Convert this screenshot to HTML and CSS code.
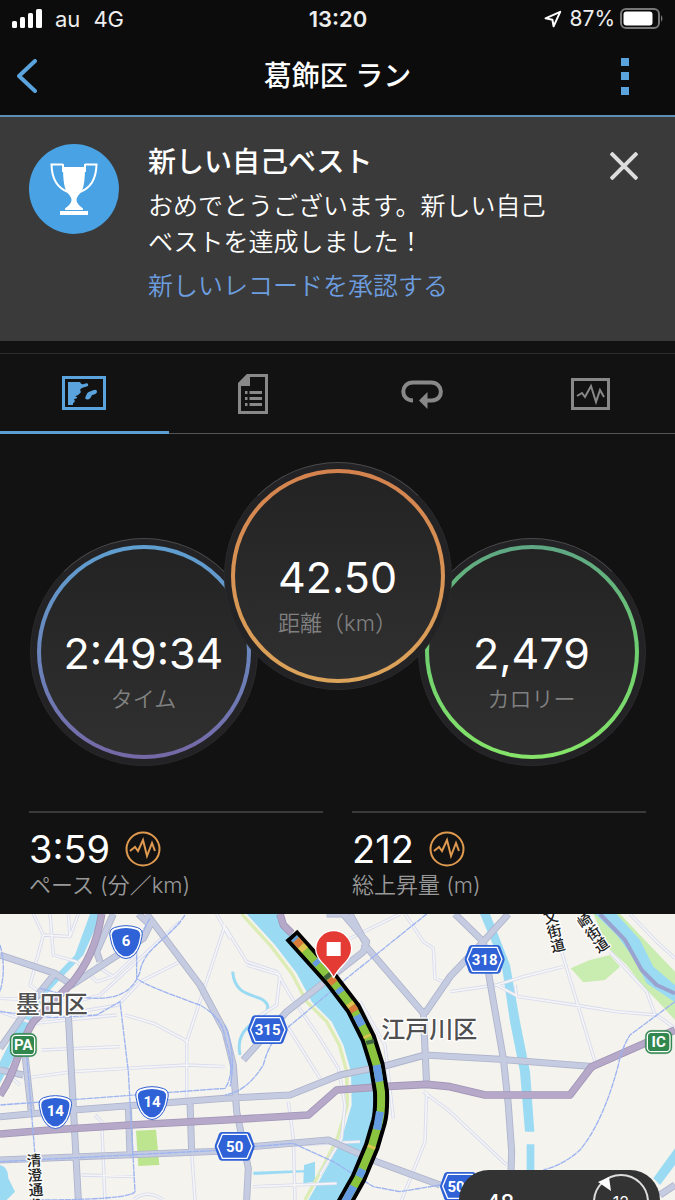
FILE: index.html
```
<!DOCTYPE html>
<html lang="ja">
  <head>
    <meta charset="UTF-8" />
    <meta name="viewport" content="width=device-width, initial-scale=1.0" />
    <title>葛飾区 ラン</title>
    <link rel="stylesheet" href="styles.css">
  </head>
  <body>
    <div class="status-bar">
      <div class="status-left">
        <svg class="signal" viewBox="0 0 30 20" aria-hidden="true">
          <rect x="0" y="12" width="5" height="7" rx="1.5" />
          <rect x="8" y="8" width="5" height="11" rx="1.5" />
          <rect x="16" y="4" width="5" height="15" rx="1.5" />
          <rect x="24" y="0" width="6" height="19" rx="1.5" />
        </svg>
        <span>au</span>
        <span>4G</span>
      </div>
      <time class="status-time">13:20</time>
      <div class="status-right">
        <svg class="location" viewBox="0 0 18 18" aria-hidden="true">
          <path d="M1.5 8.3 16.2 1.8 9.6 16.3 8.4 9.7Z" />
        </svg>
        <span>87%</span>
        <svg class="battery" viewBox="0 0 44 22" aria-hidden="true">
          <rect class="battery-case" x="1" y="1" width="38" height="19" rx="5" />
          <rect class="battery-level" x="3.500" y="3.500" width="29" height="14" rx="3" />
          <path class="battery-tip" d="M41 7q3 3.500 0 7z" />
        </svg>
      </div>
    </div>

    <header class="header">
      <button class="icon-button back" aria-label="戻る">
        <svg viewBox="0 0 20 34"><path d="M18 2 2 17 18 32" /></svg>
      </button>
      <h1>葛飾区 ラン</h1>
      <button class="icon-button more" aria-label="メニュー">
        <svg viewBox="0 0 8 37">
          <rect width="8" height="8" />
          <rect y="14" width="8" height="8" />
          <rect y="29" width="8" height="8" />
        </svg>
      </button>
    </header>

    <section class="banner">
      <svg class="trophy" viewBox="0 0 90 90" aria-hidden="true">
        <circle cx="45" cy="45" r="45" />
        <path class="trophy-handle" d="M34 20.500H22.500Q23 42 39 48M56 20.500H67.500Q67 42 51 48" />
        <path class="trophy-handle" d="M34 20V28M56 20V28" />
        <path class="trophy-cup" d="M34 23H56Q56 45 51 49.500 47.500 53 47.500 56 47.500 60 54 64.500V66H36V64.500Q42.500 60 42.500 56 42.500 53 39 49.500 34 45 34 23ZM31 67H59V71H31Z" />
      </svg>
      <div class="banner-text">
        <h2>新しい自己ベスト</h2>
        <p>おめでとうございます。新しい自己ベストを達成しました！</p>
        <a href="#">新しいレコードを承認する</a>
      </div>
      <button class="icon-button close" aria-label="閉じる">
        <svg viewBox="0 0 28 28"><path d="M1 1 27 27M27 1 1 27" /></svg>
      </button>
    </section>

    <nav class="tabs">
      <button class="tab active" aria-label="地図">
        <svg width="44" height="34" viewBox="0 0 44 34">
          <rect x="1.500" y="1.500" width="41" height="31" fill="none" stroke="currentColor" stroke-width="3" />
          <path d="M6 6H18Q19 9 22 8 27 6 26 10 23 11 20 12 17 13 19 16 16 20 13 20 18 22 12 23 14 26 11 27V29H6Z" />
          <path d="M24 20Q25 16 28 15.500 35 12 35 15.500 35 18 30 19 28 24 25 23.500 22 23 24 20Z" />
        </svg>
      </button>
      <button class="tab" aria-label="詳細">
        <svg width="30" height="40" viewBox="0 0 30 40">
          <path d="M9.500 1.500H28.500V38.500H1.500V9.500Z" fill="none" stroke="currentColor" stroke-width="3" />
          <path d="M9 1H12V12H1V9Z" />
          <path d="M7 17h2.500v3H7zM11.500 17H24v3H11.500zM7 23h2.500v3H7zM11.500 23H24v3H11.500zM7 29h2.500v3H7zM11.500 29H24v3H11.500z" />
        </svg>
      </button>
      <button class="tab" aria-label="ラップ">
        <svg width="42" height="30" viewBox="0 0 42 30">
          <path d="M12 21.500C-1 21.500-1 3.500 12 3.500H30C43 3.500 43 21.500 31 21.500H25" fill="none" stroke="currentColor" stroke-width="4" />
          <path d="M26.500 13V30L18 21.500Z" />
        </svg>
      </button>
      <button class="tab" aria-label="グラフ">
        <svg width="39" height="32" viewBox="0 0 39 32">
          <rect x="1.500" y="1.500" width="36" height="29" fill="none" stroke="currentColor" stroke-width="3" />
          <path d="M6 18 11 15 14 19 20 8 25 24 29 12 33 19" fill="none" stroke="currentColor" stroke-width="2" />
        </svg>
      </button>
    </nav>

    <section class="gauges">
      <div class="gauge time">
        <div class="gauge-ring">
          <div class="gauge-face">
            <strong>2:49:34</strong>
            <span>タイム</span>
          </div>
        </div>
      </div>
      <div class="gauge distance">
        <div class="gauge-ring">
          <div class="gauge-face">
            <strong>42.50</strong>
            <span>距離（km）</span>
          </div>
        </div>
      </div>
      <div class="gauge calories">
        <div class="gauge-ring">
          <div class="gauge-face">
            <strong>2,479</strong>
            <span>カロリー</span>
          </div>
        </div>
      </div>
    </section>

    <section class="stats">
      <div class="stat">
        <div class="stat-value">
          <strong>3:59</strong>
          <svg class="pulse" viewBox="0 0 36 36" aria-hidden="true">
            <circle cx="18" cy="18" r="16.500" />
            <path d="M5 20 10 16 13 20 18 9 22 25 27 12 30 20" />
          </svg>
        </div>
        <span>ペース (分／km)</span>
      </div>
      <div class="stat">
        <div class="stat-value">
          <strong>212</strong>
          <svg class="pulse" viewBox="0 0 36 36" aria-hidden="true">
            <circle cx="18" cy="18" r="16.500" />
            <path d="M5 20 10 16 13 20 18 9 22 25 27 12 30 20" />
          </svg>
        </div>
        <span>総上昇量 (m)</span>
      </div>
    </section>

    <section class="map">
      <svg class="map-canvas" viewBox="0 27 2025 858" preserveAspectRatio="xMidYMin slice">
        <defs>
          <g id="national">
            <path d="M-35-44Q0-56 35-44 52-38 48-18 40 34 12 46 0 51-12 46-40 34-48-18-52-38-35-44Z" fill="#fff" stroke="#2f5fd0" stroke-width="3" />
            <path d="M-31-38Q0-48 31-38 45-33 42-16 35 30 10 40 0 44-10 40-35 30-42-16-45-33-31-38Z" fill="#2f62d6" />
          </g>
          <g id="prefectural">
            <path d="M-38-43H38Q44-43 47-38L59-5Q61 0 59 5L47 38Q44 43 38 43H-38Q-44 43-47 38L-59 5Q-61 0-59-5L-47-38Q-44-43-38-43Z" fill="#2f62d6" />
            <path d="M-37-36H37L52 0 37 36H-37L-52 0Z" fill="none" stroke="#fff" stroke-width="4" stroke-linejoin="round" />
          </g>
        </defs>

        <!-- parks -->
        <g fill="#c9ecb0">
          <path d="M408 677 468 674 478 780 415 783Z" fill="#bde590" />
          <path d="M1712 190 1770 165 1830 150 1860 185 1815 225 1750 232Z" />
          <path d="M1780 27H1860L2025 200V345L1975 290 1925 240 1880 180 1825 130Z" />
        </g>

        <!-- rivers and canals -->
        <g class="water">
          <path d="M270 27H305L250 150 150 255 90 345 30 480 0 535V470L50 370 110 270 225 150Z" />
          <path d="M0 780Q25 785 25 820L45 860 20 885H0Z" />
          <path d="M740 27H840L880 90 1005 220 1075 330 1115 450 1130 560 1125 650 1080 780 1025 885H925L985 780 1025 700 1055 600 1053 500 1030 420 995 350 935 290 890 205 825 120Z" />
          <path d="M1440 27H1470L1530 180 1560 350 1590 500 1603 680H1575L1560 500 1530 350 1505 180ZM1580 718H1603V800H1580Z" />
          <path d="M1785 27H1850L1920 105 1960 185 2025 240V292L1940 235 1905 165 1850 90Z" />
          <path d="M2025 730 1960 820 1980 840 2025 780Z" />
          <path d="M912 780 945 770V830L910 835ZM760 800 915 795V802L760 810Z" />
          <path d="M698 200C705 290 790 260 803 302 810 345 700 350 720 450" class="stream" />
        </g>
        <path d="M725 27 810 120 875 205 920 290 980 350 1018 420 1040 500 1042 600 1012 700 972 780 915 885" class="bank" />
        <path d="M1800 27 1875 105 1925 195 1970 240 2025 265" class="border-line" />

        <!-- minor streets -->
        <g class="minor-case">
          <path id="streets" d="M100 27 130 90 210 95 235 27M150 27 160 150 230 170M205 27 210 95M130 90 90 240 130 270M0 280 230 290 300 270 540 50M230 170 290 230 340 215 410 150M285 180 340 215M125 435 360 425M70 520 220 500 380 490 560 480 675 485M675 60 560 410 560 590M650 27 690 100M375 330 460 355 565 410M0 320 100 355 350 330M120 340 355 300 420 230 540 170M245 810 405 815M285 630 305 650 315 885M0 490 60 540M575 740 585 885M400 885Q440 850 490 885M675 65 740 170 830 200 870 270 960 400 1015 490 1035 600 1025 700 960 810M740 180 840 210 830 300 760 345M860 360 960 520M865 590 880 700 885 885M760 845 1010 835M1215 27 1270 110 1300 130 1305 220 1350 240M990 130 1200 27M1270 560 1350 620 1520 780M1280 560 1275 710 1205 885M870 720 1080 710M1080 290 1155 420 1180 640M1350 260 1490 240 1570 215 1690 185M1490 240 1555 275 1725 300 1850 320 1970 330 2025 370M1685 140 1785 470M1830 140 1940 260 1965 330M1890 27 1970 110 2025 160M1545 240 1550 275" />
        </g>
        <use href="#streets" class="minor-fill" />

        <!-- main roads -->
        <g class="road-case">
          <g id="roads">
            <path d="M0 150 165 205 215 240 430 100 450 60 415 27M165 205 105 280 0 430M340 27 290 140 300 170M440 27 600 240 675 380 700 480 710 620 745 790 740 885M205 330 235 885M75 450 95 630M0 635 220 615 675 580 870 570 1020 510 1165 480 1275 450 1500 463 1785 485M0 765 240 755 675 738M385 600 390 750M570 590 575 740M730 465 860 320 1090 140 1100 110 1030 27M1090 115 1270 325 1280 540M1100 120 1050 27M1275 325 1350 215 1450 110 1525 27M1365 27 1450 110 1475 260 1510 460 1525 600 1535 740 1530 885M0 495 70 510M755 725 985 705 1130 770 1320 840M980 27H1030L1045 40M1980 870 2025 840" />
          </g>
        </g>
        <use href="#roads" class="road-fill" />
        <g class="express-case">
          <path id="express" d="M305 27C290 120 260 180 215 235L100 350C55 420 50 500 0 570M0 687 150 675 390 660 675 645 925 630 1010 555 1150 545 1280 538 1350 545 1455 570H1710L1775 485 2025 375M840 27 850 60 875 85" />
        </g>
        <use href="#express" class="express-fill" />

        <!-- railways -->
        <g class="rail">
          <path d="M0 120Q20 190 0 260M555 30C510 100 430 130 420 200 390 290 300 300 120 250M450 40 410 110V220Q430 240 600 300 670 340 675 400 710 500 675 550L0 600M0 320 160 338 290 330 360 290 385 500 405 860Q390 885 90 885M80 450 105 750M0 770 675 735M1280 27 1040 220 860 370 Q810 400 790 480 740 560 675 570M675 360Q710 450 690 545M760 725 880 715 1000 770 1120 845 1200 860 1320 840M2025 290 1890 390Q1865 430 1855 480 1810 650 1740 735 1690 780 1630 795" />
        </g>

        <!-- recorded route, coloured by pace -->
        <g class="route">
          <path class="route-edge" d="M874 90 995 225 1060 310 1105 400 1130 480 1143 560Q1145 620 1137 650L1115 725 1075 820 1030 900" />
          <path class="route-line" d="M882 99 995 225 1060 310 1105 400 1130 480 1143 560Q1145 620 1137 650L1115 725 1075 820 1030 900" />
          <path class="fast" d="M882 99 888 105M1014 250 1024 263M1070 331 1086 362M1130 480 1138 530M1140 620 1131 674M1088 793 1077 815M1061 844 1030 900M945 167 955 178" />
          <path class="slow" d="M888 105 903 122M990 219 1003 235M1055 303 1065 319" />
          <path class="medium" d="M903 122 915 135M1048 294 1055 303M1100 390 1103 397M1116 722 1113 730" />
          <path class="stop" d="M1109 405 1112 417M980 207 989 218" />
        </g>
        <path d="M1001 218C982 180 947 166 947 131A54 54 0 0 1 1055 131C1055 166 1020 180 1001 218Z" fill="#e53b35" stroke="#fff" stroke-width="4" />
        <rect x="980" y="111" width="42" height="42" fill="#fff" />

        <!-- shields and place names -->
        <use href="#national" x="378" y="112" />
        <use href="#national" x="166" y="622" />
        <use href="#national" x="456" y="595" />
        <use href="#prefectural" x="803" y="374" />
        <use href="#prefectural" x="1454" y="163" />
        <use href="#prefectural" x="704" y="724" />
        <use href="#prefectural" x="1380" y="844" />
        <g fill="#32874f" stroke="#32874f">
          <rect x="30" y="385" width="80" height="70" rx="18" />
          <rect x="1936" y="376" width="80" height="70" rx="18" />
        </g>
        <g fill="none" stroke="#fff" stroke-width="4">
          <rect x="36" y="391" width="68" height="58" rx="12" />
          <rect x="1942" y="382" width="68" height="58" rx="12" />
        </g>
        <g class="shield-text">
          <text x="378" y="124">6</text>
          <text x="166" y="634">14</text>
          <text x="456" y="607">14</text>
          <text x="803" y="390">315</text>
          <text x="1454" y="179">318</text>
          <text x="704" y="740">50</text>
          <text x="1368" y="860">50</text>
          <text x="70" y="436">PA</text>
          <text x="1976" y="427">IC</text>
        </g>
        <g class="place">
          <text x="155" y="325">墨田区</text>
          <text x="1288" y="399">江戸川区</text>
        </g>
        <g class="street-name">
          <text transform="translate(100 744) rotate(-4)">清澄通り</text>
          <text transform="translate(1647 14) rotate(-14)">文街道</text>
          <text transform="translate(1742 28) rotate(-34)">崎街道</text>
        </g>
      </svg>

      <div class="speed-panel">
        <span class="speed">48</span>
        <div class="compass">
          <svg viewBox="0 0 60 60" aria-hidden="true">
            <circle cx="30" cy="30" r="27" />
            <path d="M7 10 18 5 20 19Z" />
          </svg>
          <span>12</span>
        </div>
      </div>
    </section>
  </body>
</html>
```
FILE: styles.css
```
* {
  box-sizing: border-box;
  margin: 0;
  padding: 0;
}

body {
  min-height: 100vh;
  display: flex;
  flex-direction: column;
  background: #121212;
  color: #fff;
  font-family: Inter, "Noto Sans CJK JP", sans-serif;
}

button {
  border: none;
  background: none;
  color: inherit;
  cursor: pointer;
}

svg {
  display: block;
}

.status-bar {
  display: grid;
  grid-template-columns: 1fr auto 1fr;
  align-items: center;
  height: 37px;
  padding: 0 11px 0 12px;
  background: #0c0c0c;
  font-size: 22px;
  color: #eee;
}

.status-left,
.status-right {
  display: flex;
  align-items: center;
  gap: 13px;
}

.status-right {
  justify-content: flex-end;
  gap: 5px;
  font-size: 21px;
}

.status-time {
  font-weight: 600;
}

.signal {
  width: 30px;
  height: 20px;
  fill: #fff;
}

.location {
  width: 18px;
  height: 18px;
  margin-right: 3px;
  fill: none;
  stroke: #fff;
  stroke-width: 2;
  stroke-linejoin: round;
}

.battery {
  width: 44px;
  height: 22px;
}

.battery-case {
  fill: none;
  stroke: #777;
  stroke-width: 2;
}

.battery-level {
  fill: #fff;
}

.battery-tip {
  fill: #777;
}

.header {
  display: flex;
  align-items: center;
  justify-content: space-between;
  height: 80px;
  padding: 0 14px;
  background: #0c0c0c;
  border-bottom: 2px solid #5b8fb8;
}

.header h1 {
  font-size: 28px;
  line-height: 40px;
  font-weight: 500;
}

.icon-button {
  display: flex;
  align-items: center;
  justify-content: center;
  height: 44px;
}

.back,
.more {
  width: 72px;
  color: #5ba3dc;
}

.back {
  justify-content: flex-start;
  padding-left: 3px;
}

.back svg {
  width: 20px;
  height: 34px;
  fill: none;
  stroke: currentColor;
  stroke-width: 4;
  stroke-linecap: round;
  stroke-linejoin: round;
}

.more svg {
  width: 8px;
  height: 37px;
  fill: currentColor;
}

.banner {
  display: flex;
  align-items: flex-start;
  min-height: 224px;
  padding: 27px 29px;
  background: #3a3a3a;
}

.trophy {
  flex: none;
  width: 90px;
  height: 90px;
  margin-right: 29px;
  fill: #49a2e4;
}

.trophy-handle {
  fill: none;
  stroke: #fff;
  stroke-width: 2;
}

.trophy-cup {
  fill: #fff;
}

.banner-text {
  flex: 1;
  font-size: 25px;
  line-height: 36px;
  font-weight: 350;
}

.banner-text h2 {
  margin-bottom: 8px;
  font-size: 28px;
  line-height: 36px;
  font-weight: 500;
}

.banner-text p {
  margin-bottom: 8px;
}

.banner-text a {
  color: #6c9ddf;
  text-decoration: none;
}

.close {
  flex: none;
  width: 44px;
  margin-left: 32px;
}

.close svg {
  width: 28px;
  height: 28px;
  stroke: #ddd;
  stroke-width: 4;
}

.tabs {
  display: grid;
  grid-template-columns: repeat(4, 1fr);
  height: 81px;
  margin-top: 12px;
  border-top: 1px solid #2c2c2c;
}

.tab {
  display: flex;
  align-items: center;
  justify-content: center;
  border-bottom: 1px solid #555;
  color: #888;
}

.tab svg {
  fill: currentColor;
}

.tab.active {
  border-bottom: 3px solid #5b9fd4;
  color: #5ba3dc;
}

.gauges {
  display: flex;
  justify-content: center;
  padding: 28px 0 45px;
}

.gauge {
  flex: none;
  width: 228px;
  height: 228px;
  margin-top: 76px;
  padding: 6px;
  border: 1px solid #2a2a2c;
  border-top-color: #4a4a4c;
  border-radius: 50%;
  background: #232325;
}

.gauge-ring {
  height: 100%;
  padding: 4px;
  border-radius: 50%;
}

.gauge-face {
  display: flex;
  flex-direction: column;
  align-items: center;
  height: 100%;
  padding-top: 80px;
  border-radius: 50%;
  background: linear-gradient(#232323, #303030);
}

.gauge strong {
  font-size: 43px;
  line-height: 48px;
  font-weight: 400;
}

.gauge span {
  margin-top: 6px;
  font-size: 22px;
  line-height: 32px;
  font-weight: 350;
  color: #808080;
}

.time .gauge-ring {
  background: linear-gradient(#5f9fd0, #6a86bd 50%, #7568a6);
}

.distance {
  z-index: 1;
  margin: 0 -34px;
}

.distance .gauge-ring {
  background: linear-gradient(#d4824e, #dca45a);
}

.calories .gauge-ring {
  background: linear-gradient(#5ea684, #6fcf70 50%, #85e468);
}

.stats {
  display: grid;
  grid-template-columns: 1fr 1fr;
  gap: 29px;
  padding: 0 29px 13px;
}

.stat {
  padding-top: 16px;
  border-top: 2px solid #3a3a3a;
}

.stat-value {
  display: flex;
  align-items: center;
  gap: 15px;
}

.stat-value strong {
  font-size: 38px;
  line-height: 40px;
  font-weight: 400;
}

.stat > span {
  display: block;
  font-size: 22px;
  line-height: 32px;
  font-weight: 350;
  color: #999;
}

.pulse {
  width: 36px;
  height: 36px;
  fill: none;
  stroke: #e09a50;
  stroke-width: 2;
}

.map {
  position: relative;
  flex: 1;
  min-height: 286px;
  overflow: hidden;
  background: #f5f3ee;
}

.map-canvas {
  position: absolute;
  inset: 0;
  width: 100%;
  height: 100%;
  fill: none;
  stroke-linejoin: round;
}

.water {
  fill: #9adbf3;
}

.water .stream {
  fill: none;
  stroke: #9adbf3;
  stroke-width: 9;
}

.bank {
  stroke: #dcecb4;
  stroke-width: 10;
}

.border-line {
  stroke: #9aa3cf;
  stroke-width: 12;
}

.minor-case {
  stroke: #d6daee;
  stroke-width: 10;
}

.minor-fill {
  stroke: #f6f5f5;
  stroke-width: 5;
}

.road-case {
  stroke: #aeb4cb;
  stroke-width: 21;
}

.road-fill {
  stroke: #c5cbe0;
  stroke-width: 16;
}

.express-case {
  stroke: #a095b6;
  stroke-width: 23;
}

.express-fill {
  stroke: #b5a8c9;
  stroke-width: 18;
}

.rail {
  stroke: #9db4f0;
  stroke-width: 4;
  stroke-dasharray: 18 2;
}

.route {
  stroke-width: 24;
}

.route-edge {
  stroke: #000;
  stroke-width: 48;
}

.route-line {
  stroke: #8bc540;
}

.fast {
  stroke: #659be0;
}

.slow {
  stroke: #d9793a;
}

.medium {
  stroke: #dfc34f;
}

.stop {
  stroke: #3d6640;
}

.shield-text {
  font-size: 45px;
  font-weight: 700;
  font-family: Roboto, Arial, sans-serif;
  fill: #fff;
  text-anchor: middle;
}

.place,
.street-name {
  fill: #505050;
  stroke: #fff;
  stroke-width: 8;
  paint-order: stroke;
  font-family: "Noto Sans CJK JP", sans-serif;
  font-size: 72px;
  font-weight: 500;
  text-anchor: middle;
}

.street-name {
  font-size: 44px;
  fill: #222;
  text-anchor: start;
  writing-mode: vertical-rl;
}

.speed-panel {
  position: absolute;
  right: 15px;
  bottom: -34px;
  display: flex;
  align-items: center;
  justify-content: space-between;
  width: 201px;
  height: 64px;
  padding: 0 9px 0 27px;
  border-radius: 30px;
  background: #333;
}

.speed {
  font-size: 22px;
  font-weight: 500;
}

.compass {
  display: grid;
  place-items: center;
}

.compass > * {
  grid-area: 1 / 1;
}

.compass svg {
  width: 60px;
  height: 60px;
  fill: none;
  stroke: #ddd;
  stroke-width: 2;
}

.compass path {
  fill: #fff;
  stroke: none;
}

.compass span {
  font-size: 16px;
}
```
